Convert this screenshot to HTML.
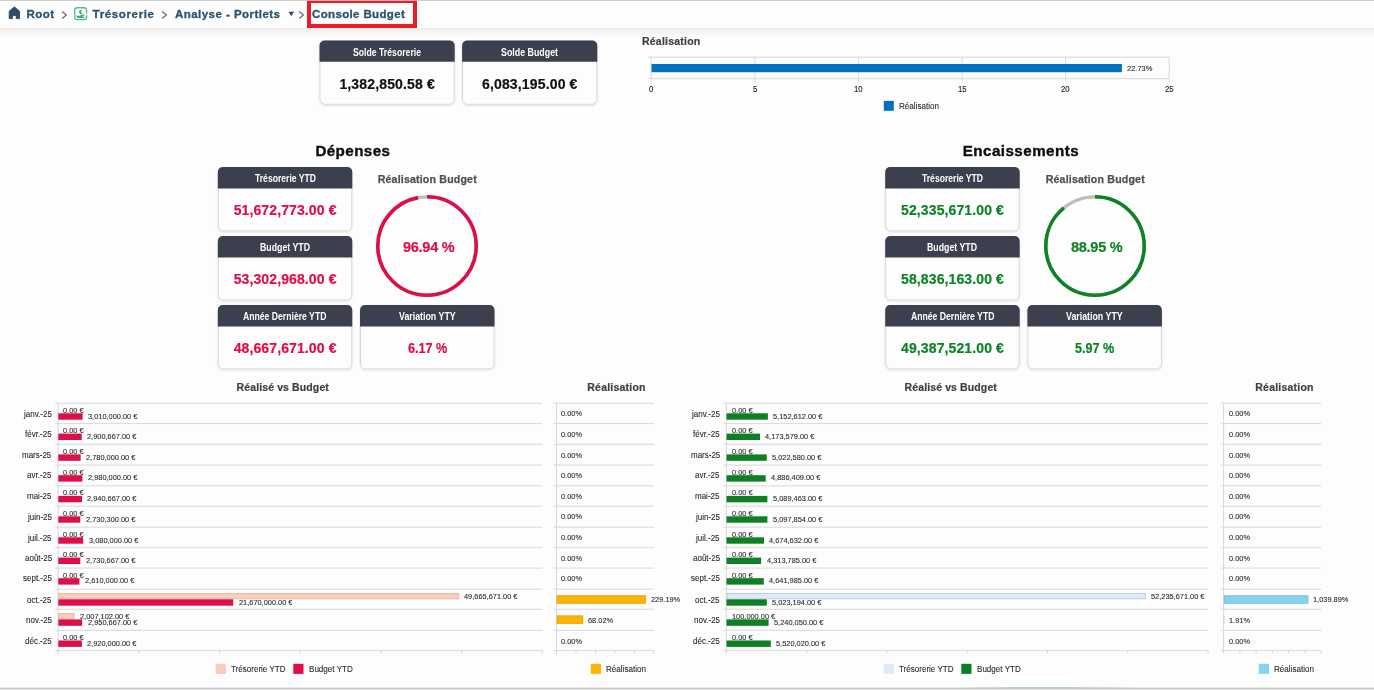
<!DOCTYPE html>
<html><head><meta charset="utf-8"><title>Console Budget</title>
<style>
html,body{margin:0;padding:0;background:#fdfdfd;}
body{width:1374px;height:690px;position:relative;overflow:hidden;font-family:"Liberation Sans", sans-serif;}
.t{position:absolute;white-space:pre;font-family:"Liberation Sans", sans-serif;}
</style></head><body><div id="wrap" style="position:absolute;left:0;top:0;width:1374px;height:690px;will-change:transform;transform:translateZ(0)">
<div style="position:absolute;left:0;top:0;width:1374px;height:28px;background:#fdfdfe;"></div>
<div style="position:absolute;left:0;top:27.4px;width:1374px;height:12px;background:linear-gradient(180deg,rgba(0,0,20,0.035),rgba(0,0,20,0.06) 12%,rgba(0,0,10,0.036) 40%,rgba(0,0,0,0.012) 78%,rgba(0,0,0,0))"></div>
<div style="position:absolute;left:0;top:0;width:1374px;height:28px;background:#fdfdfe"></div>
<svg style="position:absolute;left:8px;top:6px" width="14" height="14" viewBox="0 0 14 14"><path d="M6.4 0.9 L11.6 5.2 V12.6 H8.2 V9.4 H4.6 V12.6 H1.2 V5.2 Z" fill="#2b4d68" stroke="#2b4d68" stroke-width="0.9" stroke-linejoin="round"/></svg>
<svg style="position:absolute;left:61px;top:10px" width="8" height="10" viewBox="0 0 8 10"><path d="M1.2 1.6 L5.3 5 L1.2 8.4" fill="none" stroke="#6f6f6f" stroke-width="1.35"/></svg>
<svg style="position:absolute;left:74.0px;top:7.4px" width="14" height="14" viewBox="0 0 14 14"><rect x="0.75" y="0.75" width="11.8" height="11.8" rx="2.3" fill="#fff" stroke="#4fbf88" stroke-width="1.35"/><rect x="11.6" y="6.4" width="2" height="1.9" fill="#fff"/><path d="M7.9 2.8 A2.3 2.3 0 1 0 8.5 7.0 A2.9 2.9 0 0 1 7.9 2.8 Z" fill="#2fae6b"/><path d="M2.3 7.9 C3.2 9.2 5 9.0 6.6 8.3 L10.4 7.3 V11 H4.4 C3 11 2.3 9.6 2.3 7.9Z" fill="#35b272"/><rect x="8.6" y="8.9" width="1.6" height="1.0" fill="#e9f7ef"/></svg>
<svg style="position:absolute;left:160.5px;top:10px" width="8" height="10" viewBox="0 0 8 10"><path d="M1.2 1.6 L5.3 5 L1.2 8.4" fill="none" stroke="#6f6f6f" stroke-width="1.35"/></svg>
<svg style="position:absolute;left:298px;top:10px" width="8" height="10" viewBox="0 0 8 10"><path d="M1.2 1.6 L5.3 5 L1.2 8.4" fill="none" stroke="#6f6f6f" stroke-width="1.35"/></svg>
<div style="position:absolute;left:307px;top:-1px;width:110px;height:29px;border:4px solid #ec1c24;box-sizing:border-box"></div>
<svg style="position:absolute;left:372px;top:191px" width="110" height="110" viewBox="0 0 110 110"><circle cx="55" cy="55" r="49.2" fill="none" stroke="#bdbdbd" stroke-width="3.2"/><circle cx="55" cy="55" r="49.2" fill="none" stroke="#dc0f49" stroke-width="3.6" stroke-dasharray="299.67 309.13" transform="rotate(-90 55 55)"/></svg>
<svg style="position:absolute;left:1040.3px;top:191px" width="110" height="110" viewBox="0 0 110 110"><circle cx="55" cy="55" r="49.2" fill="none" stroke="#bdbdbd" stroke-width="3.2"/><circle cx="55" cy="55" r="49.2" fill="none" stroke="#0d8326" stroke-width="3.6" stroke-dasharray="274.97 309.13" transform="rotate(-90 55 55)"/></svg>
<div style="position:absolute;left:960px;top:687.4px;width:180px;height:1.4px;background:linear-gradient(90deg,rgba(150,215,170,0),rgba(150,215,170,0.8) 30%,rgba(150,215,170,0.8) 60%,rgba(150,215,170,0))"></div>
<svg style="position:absolute;left:0;top:0" width="1374" height="690" viewBox="0 0 1374 690"><defs><filter id="sh" x="-10%" y="-10%" width="120%" height="130%"><feDropShadow dx="0" dy="0.9" stdDeviation="0.9" flood-color="#000" flood-opacity="0.13"/></filter></defs>
<rect x="0.00" y="0.00" width="1374.00" height="0.90" fill="#c9c9c9"/>
<path d="M288.5 11.7 H294.1 L291.3 16.3 Z" fill="#2b4d68"/>
<rect x="320.00" y="40.90" width="134.20" height="63.40" rx="5.0" fill="#fdfdfd" stroke="#d9d9d9" stroke-width="1" filter="url(#sh)"/>
<path d="M319.50 61.80 V45.90 Q319.50 40.40 325.00 40.40 H449.20 Q454.70 40.40 454.70 45.90 V61.80 Z" fill="#3c3f4d"/>
<rect x="462.60" y="40.90" width="134.20" height="63.40" rx="5.0" fill="#fdfdfd" stroke="#d9d9d9" stroke-width="1" filter="url(#sh)"/>
<path d="M462.10 61.80 V45.90 Q462.10 40.40 467.60 40.40 H591.80 Q597.30 40.40 597.30 45.90 V61.80 Z" fill="#3c3f4d"/>
<rect x="648.00" y="56.60" width="521.20" height="1.20" fill="#dedede"/>
<rect x="648.00" y="78.00" width="521.20" height="1.20" fill="#dedede"/>
<rect x="650.60" y="56.70" width="1.20" height="25.20" fill="#dedede"/>
<rect x="754.20" y="56.70" width="1.20" height="25.20" fill="#dedede"/>
<rect x="857.80" y="56.70" width="1.20" height="25.20" fill="#dedede"/>
<rect x="961.40" y="56.70" width="1.20" height="25.20" fill="#dedede"/>
<rect x="1065.00" y="56.70" width="1.20" height="25.20" fill="#dedede"/>
<rect x="1168.60" y="56.70" width="1.20" height="25.20" fill="#dedede"/>
<rect x="651.50" y="64.00" width="470.40" height="8.20" fill="#0070c0"/>
<rect x="883.80" y="100.90" width="10.00" height="9.90" fill="#0070c0"/>
<rect x="218.30" y="167.50" width="133.50" height="63.40" rx="5.0" fill="#fdfdfd" stroke="#d9d9d9" stroke-width="1" filter="url(#sh)"/>
<path d="M217.80 188.40 V172.50 Q217.80 167.00 223.30 167.00 H346.80 Q352.30 167.00 352.30 172.50 V188.40 Z" fill="#3c3f4d"/>
<rect x="218.30" y="236.50" width="133.50" height="63.40" rx="5.0" fill="#fdfdfd" stroke="#d9d9d9" stroke-width="1" filter="url(#sh)"/>
<path d="M217.80 257.40 V241.50 Q217.80 236.00 223.30 236.00 H346.80 Q352.30 236.00 352.30 241.50 V257.40 Z" fill="#3c3f4d"/>
<rect x="218.30" y="305.50" width="133.50" height="63.40" rx="5.0" fill="#fdfdfd" stroke="#d9d9d9" stroke-width="1" filter="url(#sh)"/>
<path d="M217.80 326.40 V310.50 Q217.80 305.00 223.30 305.00 H346.80 Q352.30 305.00 352.30 310.50 V326.40 Z" fill="#3c3f4d"/>
<rect x="360.50" y="305.50" width="133.50" height="63.40" rx="5.0" fill="#fdfdfd" stroke="#d9d9d9" stroke-width="1" filter="url(#sh)"/>
<path d="M360.00 326.40 V310.50 Q360.00 305.00 365.50 305.00 H489.00 Q494.50 305.00 494.50 310.50 V326.40 Z" fill="#3c3f4d"/>
<rect x="885.70" y="167.50" width="133.50" height="63.40" rx="5.0" fill="#fdfdfd" stroke="#d9d9d9" stroke-width="1" filter="url(#sh)"/>
<path d="M885.20 188.40 V172.50 Q885.20 167.00 890.70 167.00 H1014.20 Q1019.70 167.00 1019.70 172.50 V188.40 Z" fill="#3c3f4d"/>
<rect x="885.70" y="236.50" width="133.50" height="63.40" rx="5.0" fill="#fdfdfd" stroke="#d9d9d9" stroke-width="1" filter="url(#sh)"/>
<path d="M885.20 257.40 V241.50 Q885.20 236.00 890.70 236.00 H1014.20 Q1019.70 236.00 1019.70 241.50 V257.40 Z" fill="#3c3f4d"/>
<rect x="885.70" y="305.50" width="133.50" height="63.40" rx="5.0" fill="#fdfdfd" stroke="#d9d9d9" stroke-width="1" filter="url(#sh)"/>
<path d="M885.20 326.40 V310.50 Q885.20 305.00 890.70 305.00 H1014.20 Q1019.70 305.00 1019.70 310.50 V326.40 Z" fill="#3c3f4d"/>
<rect x="1027.90" y="305.50" width="133.50" height="63.40" rx="5.0" fill="#fdfdfd" stroke="#d9d9d9" stroke-width="1" filter="url(#sh)"/>
<path d="M1027.40 326.40 V310.50 Q1027.40 305.00 1032.90 305.00 H1156.40 Q1161.90 305.00 1161.90 310.50 V326.40 Z" fill="#3c3f4d"/>
<rect x="55.10" y="402.60" width="487.30" height="1.20" fill="#dedede"/>
<rect x="55.10" y="422.90" width="487.30" height="1.20" fill="#dedede"/>
<rect x="55.10" y="443.70" width="487.30" height="1.20" fill="#dedede"/>
<rect x="55.10" y="464.50" width="487.30" height="1.20" fill="#dedede"/>
<rect x="55.10" y="485.20" width="487.30" height="1.20" fill="#dedede"/>
<rect x="55.10" y="505.60" width="487.30" height="1.20" fill="#dedede"/>
<rect x="55.10" y="526.60" width="487.30" height="1.20" fill="#dedede"/>
<rect x="55.10" y="546.90" width="487.30" height="1.20" fill="#dedede"/>
<rect x="55.10" y="567.50" width="487.30" height="1.20" fill="#dedede"/>
<rect x="55.10" y="588.60" width="487.30" height="1.20" fill="#dedede"/>
<rect x="55.10" y="608.70" width="487.30" height="1.20" fill="#dedede"/>
<rect x="55.10" y="629.80" width="487.30" height="1.20" fill="#dedede"/>
<rect x="55.10" y="649.90" width="487.30" height="1.20" fill="#dedede"/>
<rect x="57.60" y="403.20" width="1.00" height="250.30" fill="#d6d6d6"/>
<rect x="57.60" y="650.50" width="1.00" height="3.00" fill="#d6d6d6"/>
<rect x="138.32" y="650.50" width="1.00" height="3.00" fill="#d6d6d6"/>
<rect x="219.03" y="650.50" width="1.00" height="3.00" fill="#d6d6d6"/>
<rect x="299.75" y="650.50" width="1.00" height="3.00" fill="#d6d6d6"/>
<rect x="380.47" y="650.50" width="1.00" height="3.00" fill="#d6d6d6"/>
<rect x="461.18" y="650.50" width="1.00" height="3.00" fill="#d6d6d6"/>
<rect x="541.90" y="650.50" width="1.00" height="3.00" fill="#d6d6d6"/>
<rect x="58.30" y="413.30" width="24.30" height="6.40" fill="#dc0f49"/>
<rect x="58.30" y="433.60" width="23.40" height="6.40" fill="#dc0f49"/>
<rect x="58.30" y="454.40" width="22.40" height="6.40" fill="#dc0f49"/>
<rect x="58.30" y="475.20" width="24.10" height="6.40" fill="#dc0f49"/>
<rect x="58.30" y="495.90" width="23.70" height="6.40" fill="#dc0f49"/>
<rect x="58.30" y="516.30" width="22.00" height="6.40" fill="#dc0f49"/>
<rect x="58.30" y="537.30" width="24.90" height="6.40" fill="#dc0f49"/>
<rect x="58.30" y="557.60" width="22.00" height="6.40" fill="#dc0f49"/>
<rect x="58.30" y="578.20" width="21.10" height="6.40" fill="#dc0f49"/>
<rect x="58.80" y="593.50" width="399.90" height="5.30" fill="#f6cdb8" stroke="#ecb9a2" stroke-width="1"/>
<rect x="58.30" y="599.30" width="174.90" height="6.40" fill="#dc0f49"/>
<rect x="58.80" y="613.60" width="15.20" height="5.30" fill="#f6cdb8" stroke="#ecb9a2" stroke-width="1"/>
<rect x="58.30" y="619.40" width="23.80" height="6.40" fill="#dc0f49"/>
<rect x="58.30" y="640.50" width="23.60" height="6.40" fill="#dc0f49"/>
<rect x="215.60" y="663.80" width="10.20" height="10.10" fill="#f6cdb8"/>
<rect x="293.30" y="663.80" width="10.20" height="10.10" fill="#dc0f49"/>
<rect x="723.30" y="402.60" width="484.70" height="1.20" fill="#dedede"/>
<rect x="723.30" y="422.90" width="484.70" height="1.20" fill="#dedede"/>
<rect x="723.30" y="443.70" width="484.70" height="1.20" fill="#dedede"/>
<rect x="723.30" y="464.50" width="484.70" height="1.20" fill="#dedede"/>
<rect x="723.30" y="485.20" width="484.70" height="1.20" fill="#dedede"/>
<rect x="723.30" y="505.60" width="484.70" height="1.20" fill="#dedede"/>
<rect x="723.30" y="526.60" width="484.70" height="1.20" fill="#dedede"/>
<rect x="723.30" y="546.90" width="484.70" height="1.20" fill="#dedede"/>
<rect x="723.30" y="567.50" width="484.70" height="1.20" fill="#dedede"/>
<rect x="723.30" y="588.60" width="484.70" height="1.20" fill="#dedede"/>
<rect x="723.30" y="608.70" width="484.70" height="1.20" fill="#dedede"/>
<rect x="723.30" y="629.80" width="484.70" height="1.20" fill="#dedede"/>
<rect x="723.30" y="649.90" width="484.70" height="1.20" fill="#dedede"/>
<rect x="725.80" y="403.20" width="1.00" height="250.30" fill="#d6d6d6"/>
<rect x="725.80" y="650.50" width="1.00" height="3.00" fill="#d6d6d6"/>
<rect x="806.08" y="650.50" width="1.00" height="3.00" fill="#d6d6d6"/>
<rect x="886.37" y="650.50" width="1.00" height="3.00" fill="#d6d6d6"/>
<rect x="966.65" y="650.50" width="1.00" height="3.00" fill="#d6d6d6"/>
<rect x="1046.93" y="650.50" width="1.00" height="3.00" fill="#d6d6d6"/>
<rect x="1127.22" y="650.50" width="1.00" height="3.00" fill="#d6d6d6"/>
<rect x="1207.50" y="650.50" width="1.00" height="3.00" fill="#d6d6d6"/>
<rect x="726.50" y="413.30" width="41.40" height="6.40" fill="#0f7f25"/>
<rect x="726.50" y="433.60" width="33.50" height="6.40" fill="#0f7f25"/>
<rect x="726.50" y="454.40" width="40.30" height="6.40" fill="#0f7f25"/>
<rect x="726.50" y="475.20" width="39.20" height="6.40" fill="#0f7f25"/>
<rect x="726.50" y="495.90" width="40.90" height="6.40" fill="#0f7f25"/>
<rect x="726.50" y="516.30" width="40.90" height="6.40" fill="#0f7f25"/>
<rect x="726.50" y="537.30" width="37.50" height="6.40" fill="#0f7f25"/>
<rect x="726.50" y="557.60" width="34.60" height="6.40" fill="#0f7f25"/>
<rect x="726.50" y="578.20" width="37.30" height="6.40" fill="#0f7f25"/>
<rect x="727.00" y="593.50" width="418.40" height="5.30" fill="#dfeaf8" stroke="#b9cfe9" stroke-width="1"/>
<rect x="726.50" y="599.30" width="40.30" height="6.40" fill="#0f7f25"/>
<rect x="726.50" y="613.10" width="0.80" height="6.30" fill="#dfeaf8" opacity="0.8"/>
<rect x="726.50" y="619.40" width="42.10" height="6.40" fill="#0f7f25"/>
<rect x="726.50" y="640.50" width="44.30" height="6.40" fill="#0f7f25"/>
<rect x="883.60" y="663.80" width="10.20" height="10.10" fill="#dfeaf8"/>
<rect x="961.30" y="663.80" width="10.20" height="10.10" fill="#0f7f25"/>
<rect x="553.50" y="402.60" width="100.50" height="1.20" fill="#dedede"/>
<rect x="553.50" y="422.90" width="100.50" height="1.20" fill="#dedede"/>
<rect x="553.50" y="443.70" width="100.50" height="1.20" fill="#dedede"/>
<rect x="553.50" y="464.50" width="100.50" height="1.20" fill="#dedede"/>
<rect x="553.50" y="485.20" width="100.50" height="1.20" fill="#dedede"/>
<rect x="553.50" y="505.60" width="100.50" height="1.20" fill="#dedede"/>
<rect x="553.50" y="526.60" width="100.50" height="1.20" fill="#dedede"/>
<rect x="553.50" y="546.90" width="100.50" height="1.20" fill="#dedede"/>
<rect x="553.50" y="567.50" width="100.50" height="1.20" fill="#dedede"/>
<rect x="553.50" y="588.60" width="100.50" height="1.20" fill="#dedede"/>
<rect x="553.50" y="608.70" width="100.50" height="1.20" fill="#dedede"/>
<rect x="553.50" y="629.80" width="100.50" height="1.20" fill="#dedede"/>
<rect x="553.50" y="649.90" width="100.50" height="1.20" fill="#dedede"/>
<rect x="556.00" y="403.20" width="1.00" height="250.30" fill="#d6d6d6"/>
<rect x="556.00" y="650.50" width="1.00" height="3.00" fill="#d6d6d6"/>
<rect x="575.50" y="650.50" width="1.00" height="3.00" fill="#d6d6d6"/>
<rect x="595.00" y="650.50" width="1.00" height="3.00" fill="#d6d6d6"/>
<rect x="614.50" y="650.50" width="1.00" height="3.00" fill="#d6d6d6"/>
<rect x="634.00" y="650.50" width="1.00" height="3.00" fill="#d6d6d6"/>
<rect x="653.50" y="650.50" width="1.00" height="3.00" fill="#d6d6d6"/>
<rect x="557.20" y="595.80" width="88.38" height="7.40" fill="#ffb400" stroke="#e9a000" stroke-width="1"/>
<rect x="557.20" y="615.90" width="25.53" height="7.40" fill="#ffb400" stroke="#e9a000" stroke-width="1"/>
<rect x="590.80" y="663.80" width="10.20" height="10.10" fill="#ffb400"/>
<rect x="1220.60" y="402.60" width="100.60" height="1.20" fill="#dedede"/>
<rect x="1220.60" y="422.90" width="100.60" height="1.20" fill="#dedede"/>
<rect x="1220.60" y="443.70" width="100.60" height="1.20" fill="#dedede"/>
<rect x="1220.60" y="464.50" width="100.60" height="1.20" fill="#dedede"/>
<rect x="1220.60" y="485.20" width="100.60" height="1.20" fill="#dedede"/>
<rect x="1220.60" y="505.60" width="100.60" height="1.20" fill="#dedede"/>
<rect x="1220.60" y="526.60" width="100.60" height="1.20" fill="#dedede"/>
<rect x="1220.60" y="546.90" width="100.60" height="1.20" fill="#dedede"/>
<rect x="1220.60" y="567.50" width="100.60" height="1.20" fill="#dedede"/>
<rect x="1220.60" y="588.60" width="100.60" height="1.20" fill="#dedede"/>
<rect x="1220.60" y="608.70" width="100.60" height="1.20" fill="#dedede"/>
<rect x="1220.60" y="629.80" width="100.60" height="1.20" fill="#dedede"/>
<rect x="1220.60" y="649.90" width="100.60" height="1.20" fill="#dedede"/>
<rect x="1223.10" y="403.20" width="1.00" height="250.30" fill="#d6d6d6"/>
<rect x="1223.10" y="650.50" width="1.00" height="3.00" fill="#d6d6d6"/>
<rect x="1239.37" y="650.50" width="1.00" height="3.00" fill="#d6d6d6"/>
<rect x="1255.63" y="650.50" width="1.00" height="3.00" fill="#d6d6d6"/>
<rect x="1271.90" y="650.50" width="1.00" height="3.00" fill="#d6d6d6"/>
<rect x="1288.17" y="650.50" width="1.00" height="3.00" fill="#d6d6d6"/>
<rect x="1304.43" y="650.50" width="1.00" height="3.00" fill="#d6d6d6"/>
<rect x="1320.70" y="650.50" width="1.00" height="3.00" fill="#d6d6d6"/>
<rect x="1224.30" y="595.80" width="83.58" height="7.40" fill="#87d4ef" stroke="#6cc0de" stroke-width="1"/>
<rect x="1223.80" y="615.40" width="0.70" height="8.40" fill="#87d4ef" opacity="0.75"/>
<rect x="1258.80" y="663.80" width="10.20" height="10.10" fill="#87d4ef"/>
<rect x="0.00" y="687.60" width="1374.00" height="1.60" fill="#c9c9c9"/>
<rect x="0.00" y="689.20" width="1374.00" height="0.80" fill="#dddddd"/>
</svg>
<span class="t" style="left:26.60px;top:6.00px;font-size:11.5px;line-height:16px;color:#2c526d;font-weight:bold;letter-spacing:0.471px;-webkit-text-stroke:0.3px #2c526d;">Root</span>
<span class="t" style="left:92.60px;top:6.00px;font-size:11.5px;line-height:16px;color:#2c526d;font-weight:bold;letter-spacing:0.642px;-webkit-text-stroke:0.3px #2c526d;">Trésorerie</span>
<span class="t" style="left:175.00px;top:6.00px;font-size:11.5px;line-height:16px;color:#2c526d;font-weight:bold;letter-spacing:0.461px;-webkit-text-stroke:0.3px #2c526d;">Analyse - Portlets</span>
<span class="t" style="left:312.00px;top:6.00px;font-size:11.5px;line-height:16px;color:#2c526d;font-weight:bold;letter-spacing:0.356px;-webkit-text-stroke:0.3px #2c526d;">Console Budget</span>
<span class="t" style="left:353.10px;top:45.70px;font-size:10px;line-height:14px;color:#fff;font-weight:bold;transform:scaleX(0.8676);transform-origin:0 50%;">Solde Trésorerie</span>
<span class="t" style="left:339.40px;top:74.80px;font-size:14px;line-height:19px;color:#111;font-weight:bold;letter-spacing:0.152px;-webkit-text-stroke:0.2px #111;">1,382,850.58 €</span>
<span class="t" style="left:501.20px;top:45.70px;font-size:10px;line-height:14px;color:#fff;font-weight:bold;transform:scaleX(0.8844);transform-origin:0 50%;">Solde Budget</span>
<span class="t" style="left:482.00px;top:74.80px;font-size:14px;line-height:19px;color:#111;font-weight:bold;letter-spacing:0.152px;-webkit-text-stroke:0.2px #111;">6,083,195.00 €</span>
<span class="t" style="left:642.00px;top:33.70px;font-size:10.5px;line-height:15px;color:#3f3f3f;font-weight:bold;letter-spacing:0.217px;-webkit-text-stroke:0.2px #3f3f3f;">Réalisation</span>
<span class="t" style="left:649.03px;top:83.00px;font-size:9.36px;line-height:13px;color:#1a1a1a;transform:scaleX(0.8333);transform-origin:0 50%;-webkit-text-stroke:0.12px #1a1a1a;">0</span>
<span class="t" style="left:752.63px;top:83.00px;font-size:9.36px;line-height:13px;color:#1a1a1a;transform:scaleX(0.8333);transform-origin:0 50%;-webkit-text-stroke:0.12px #1a1a1a;">5</span>
<span class="t" style="left:854.06px;top:83.00px;font-size:9.36px;line-height:13px;color:#1a1a1a;transform:scaleX(0.8333);transform-origin:0 50%;-webkit-text-stroke:0.12px #1a1a1a;">10</span>
<span class="t" style="left:957.66px;top:83.00px;font-size:9.36px;line-height:13px;color:#1a1a1a;transform:scaleX(0.8333);transform-origin:0 50%;-webkit-text-stroke:0.12px #1a1a1a;">15</span>
<span class="t" style="left:1061.26px;top:83.00px;font-size:9.36px;line-height:13px;color:#1a1a1a;transform:scaleX(0.8333);transform-origin:0 50%;-webkit-text-stroke:0.12px #1a1a1a;">20</span>
<span class="t" style="left:1164.86px;top:83.00px;font-size:9.36px;line-height:13px;color:#1a1a1a;transform:scaleX(0.8333);transform-origin:0 50%;-webkit-text-stroke:0.12px #1a1a1a;">25</span>
<span class="t" style="left:1126.50px;top:62.80px;font-size:8.1px;line-height:12px;color:#2a2a2a;transform:scaleX(0.9252);transform-origin:0 50%;-webkit-text-stroke:0.1px #2a2a2a;">22.73%</span>
<span class="t" style="left:898.80px;top:99.80px;font-size:8.9px;line-height:13px;color:#2a2a2a;transform:scaleX(0.9107);transform-origin:0 50%;-webkit-text-stroke:0.1px #2a2a2a;">Réalisation</span>
<span class="t" style="left:315.40px;top:141.00px;font-size:15.2px;line-height:20px;color:#0c0c0c;font-weight:bold;letter-spacing:0.405px;-webkit-text-stroke:0.35px #0c0c0c;">Dépenses</span>
<span class="t" style="left:254.55px;top:172.30px;font-size:10px;line-height:14px;color:#fff;font-weight:bold;transform:scaleX(0.8595);transform-origin:0 50%;">Trésorerie YTD</span>
<span class="t" style="left:233.65px;top:201.40px;font-size:14px;line-height:19px;color:#dc0f49;font-weight:bold;letter-spacing:0.113px;-webkit-text-stroke:0.2px #dc0f49;">51,672,773.00 €</span>
<span class="t" style="left:260.05px;top:241.30px;font-size:10px;line-height:14px;color:#fff;font-weight:bold;transform:scaleX(0.8765);transform-origin:0 50%;">Budget YTD</span>
<span class="t" style="left:233.65px;top:270.40px;font-size:14px;line-height:19px;color:#dc0f49;font-weight:bold;letter-spacing:0.113px;-webkit-text-stroke:0.2px #dc0f49;">53,302,968.00 €</span>
<span class="t" style="left:243.35px;top:310.30px;font-size:10px;line-height:14px;color:#fff;font-weight:bold;transform:scaleX(0.8641);transform-origin:0 50%;">Année Dernière YTD</span>
<span class="t" style="left:233.65px;top:339.40px;font-size:14px;line-height:19px;color:#dc0f49;font-weight:bold;letter-spacing:0.113px;-webkit-text-stroke:0.2px #dc0f49;">48,667,671.00 €</span>
<span class="t" style="left:398.90px;top:310.30px;font-size:10px;line-height:14px;color:#fff;font-weight:bold;transform:scaleX(0.8818);transform-origin:0 50%;">Variation YTY</span>
<span class="t" style="left:407.60px;top:339.40px;font-size:14px;line-height:19px;color:#dc0f49;font-weight:bold;transform:scaleX(0.9015);transform-origin:0 50%;-webkit-text-stroke:0.2px #dc0f49;">6.17 %</span>
<span class="t" style="left:377.70px;top:171.70px;font-size:10.6px;line-height:15px;color:#505050;font-weight:bold;letter-spacing:0.179px;-webkit-text-stroke:0.25px #505050;">Réalisation Budget</span>
<span class="t" style="left:402.90px;top:238.10px;font-size:14.5px;line-height:19px;color:#dc0f49;font-weight:bold;letter-spacing:-0.236px;-webkit-text-stroke:0.2px #dc0f49;">96.94 %</span>
<span class="t" style="left:962.70px;top:141.00px;font-size:15.2px;line-height:20px;color:#0c0c0c;font-weight:bold;letter-spacing:0.451px;-webkit-text-stroke:0.35px #0c0c0c;">Encaissements</span>
<span class="t" style="left:921.95px;top:172.30px;font-size:10px;line-height:14px;color:#fff;font-weight:bold;transform:scaleX(0.8595);transform-origin:0 50%;">Trésorerie YTD</span>
<span class="t" style="left:901.05px;top:201.40px;font-size:14px;line-height:19px;color:#0d8326;font-weight:bold;letter-spacing:0.113px;-webkit-text-stroke:0.2px #0d8326;">52,335,671.00 €</span>
<span class="t" style="left:927.45px;top:241.30px;font-size:10px;line-height:14px;color:#fff;font-weight:bold;transform:scaleX(0.8765);transform-origin:0 50%;">Budget YTD</span>
<span class="t" style="left:901.05px;top:270.40px;font-size:14px;line-height:19px;color:#0d8326;font-weight:bold;letter-spacing:0.113px;-webkit-text-stroke:0.2px #0d8326;">58,836,163.00 €</span>
<span class="t" style="left:910.75px;top:310.30px;font-size:10px;line-height:14px;color:#fff;font-weight:bold;transform:scaleX(0.8641);transform-origin:0 50%;">Année Dernière YTD</span>
<span class="t" style="left:901.05px;top:339.40px;font-size:14px;line-height:19px;color:#0d8326;font-weight:bold;letter-spacing:0.113px;-webkit-text-stroke:0.2px #0d8326;">49,387,521.00 €</span>
<span class="t" style="left:1066.30px;top:310.30px;font-size:10px;line-height:14px;color:#fff;font-weight:bold;transform:scaleX(0.8818);transform-origin:0 50%;">Variation YTY</span>
<span class="t" style="left:1075.00px;top:339.40px;font-size:14px;line-height:19px;color:#0d8326;font-weight:bold;transform:scaleX(0.9015);transform-origin:0 50%;-webkit-text-stroke:0.2px #0d8326;">5.97 %</span>
<span class="t" style="left:1045.70px;top:171.70px;font-size:10.6px;line-height:15px;color:#505050;font-weight:bold;letter-spacing:0.179px;-webkit-text-stroke:0.25px #505050;">Réalisation Budget</span>
<span class="t" style="left:1070.90px;top:238.10px;font-size:14.5px;line-height:19px;color:#0d8326;font-weight:bold;letter-spacing:-0.236px;-webkit-text-stroke:0.2px #0d8326;">88.95 %</span>
<span class="t" style="left:236.55px;top:379.70px;font-size:10.5px;line-height:15px;color:#3f3f3f;font-weight:bold;letter-spacing:0.115px;-webkit-text-stroke:0.2px #3f3f3f;">Réalisé vs Budget</span>
<span class="t" style="left:23.83px;top:407.50px;font-size:8.96px;line-height:13px;color:#2a2a2a;transform:scaleX(0.8929);transform-origin:0 50%;-webkit-text-stroke:0.1px #2a2a2a;">janv.-25</span>
<span class="t" style="left:63.40px;top:404.70px;font-size:7.99px;line-height:12px;color:#2a2a2a;transform:scaleX(0.9259);transform-origin:0 50%;-webkit-text-stroke:0.1px #2a2a2a;">0.00 €</span>
<span class="t" style="left:88.00px;top:410.50px;font-size:7.99px;line-height:12px;color:#2a2a2a;transform:scaleX(0.9259);transform-origin:0 50%;-webkit-text-stroke:0.1px #2a2a2a;">3,010,000.00 €</span>
<span class="t" style="left:25.01px;top:427.80px;font-size:8.96px;line-height:13px;color:#2a2a2a;transform:scaleX(0.8929);transform-origin:0 50%;-webkit-text-stroke:0.1px #2a2a2a;">févr.-25</span>
<span class="t" style="left:63.40px;top:425.00px;font-size:7.99px;line-height:12px;color:#2a2a2a;transform:scaleX(0.9259);transform-origin:0 50%;-webkit-text-stroke:0.1px #2a2a2a;">0.00 €</span>
<span class="t" style="left:87.11px;top:430.80px;font-size:7.99px;line-height:12px;color:#2a2a2a;transform:scaleX(0.9259);transform-origin:0 50%;-webkit-text-stroke:0.1px #2a2a2a;">2,900,667.00 €</span>
<span class="t" style="left:22.36px;top:448.60px;font-size:8.96px;line-height:13px;color:#2a2a2a;transform:scaleX(0.8929);transform-origin:0 50%;-webkit-text-stroke:0.1px #2a2a2a;">mars-25</span>
<span class="t" style="left:63.40px;top:445.80px;font-size:7.99px;line-height:12px;color:#2a2a2a;transform:scaleX(0.9259);transform-origin:0 50%;-webkit-text-stroke:0.1px #2a2a2a;">0.00 €</span>
<span class="t" style="left:86.14px;top:451.60px;font-size:7.99px;line-height:12px;color:#2a2a2a;transform:scaleX(0.9259);transform-origin:0 50%;-webkit-text-stroke:0.1px #2a2a2a;">2,780,000.00 €</span>
<span class="t" style="left:27.23px;top:469.40px;font-size:8.96px;line-height:13px;color:#2a2a2a;transform:scaleX(0.8929);transform-origin:0 50%;-webkit-text-stroke:0.1px #2a2a2a;">avr.-25</span>
<span class="t" style="left:63.40px;top:466.60px;font-size:7.99px;line-height:12px;color:#2a2a2a;transform:scaleX(0.9259);transform-origin:0 50%;-webkit-text-stroke:0.1px #2a2a2a;">0.00 €</span>
<span class="t" style="left:87.75px;top:472.40px;font-size:7.99px;line-height:12px;color:#2a2a2a;transform:scaleX(0.9259);transform-origin:0 50%;-webkit-text-stroke:0.1px #2a2a2a;">2,980,000.00 €</span>
<span class="t" style="left:27.25px;top:490.10px;font-size:8.96px;line-height:13px;color:#2a2a2a;transform:scaleX(0.8929);transform-origin:0 50%;-webkit-text-stroke:0.1px #2a2a2a;">mai-25</span>
<span class="t" style="left:63.40px;top:487.30px;font-size:7.99px;line-height:12px;color:#2a2a2a;transform:scaleX(0.9259);transform-origin:0 50%;-webkit-text-stroke:0.1px #2a2a2a;">0.00 €</span>
<span class="t" style="left:87.44px;top:493.10px;font-size:7.99px;line-height:12px;color:#2a2a2a;transform:scaleX(0.9259);transform-origin:0 50%;-webkit-text-stroke:0.1px #2a2a2a;">2,940,667.00 €</span>
<span class="t" style="left:27.68px;top:510.50px;font-size:8.96px;line-height:13px;color:#2a2a2a;transform:scaleX(0.8929);transform-origin:0 50%;-webkit-text-stroke:0.1px #2a2a2a;">juin-25</span>
<span class="t" style="left:63.40px;top:507.70px;font-size:7.99px;line-height:12px;color:#2a2a2a;transform:scaleX(0.9259);transform-origin:0 50%;-webkit-text-stroke:0.1px #2a2a2a;">0.00 €</span>
<span class="t" style="left:85.74px;top:513.50px;font-size:7.99px;line-height:12px;color:#2a2a2a;transform:scaleX(0.9259);transform-origin:0 50%;-webkit-text-stroke:0.1px #2a2a2a;">2,730,300.00 €</span>
<span class="t" style="left:28.12px;top:531.50px;font-size:8.96px;line-height:13px;color:#2a2a2a;transform:scaleX(0.8929);transform-origin:0 50%;-webkit-text-stroke:0.1px #2a2a2a;">juil.-25</span>
<span class="t" style="left:63.40px;top:528.70px;font-size:7.99px;line-height:12px;color:#2a2a2a;transform:scaleX(0.9259);transform-origin:0 50%;-webkit-text-stroke:0.1px #2a2a2a;">0.00 €</span>
<span class="t" style="left:88.56px;top:534.50px;font-size:7.99px;line-height:12px;color:#2a2a2a;transform:scaleX(0.9259);transform-origin:0 50%;-webkit-text-stroke:0.1px #2a2a2a;">3,080,000.00 €</span>
<span class="t" style="left:24.56px;top:551.80px;font-size:8.96px;line-height:13px;color:#2a2a2a;transform:scaleX(0.8929);transform-origin:0 50%;-webkit-text-stroke:0.1px #2a2a2a;">août-25</span>
<span class="t" style="left:63.40px;top:549.00px;font-size:7.99px;line-height:12px;color:#2a2a2a;transform:scaleX(0.9259);transform-origin:0 50%;-webkit-text-stroke:0.1px #2a2a2a;">0.00 €</span>
<span class="t" style="left:85.74px;top:554.80px;font-size:7.99px;line-height:12px;color:#2a2a2a;transform:scaleX(0.9259);transform-origin:0 50%;-webkit-text-stroke:0.1px #2a2a2a;">2,730,667.00 €</span>
<span class="t" style="left:22.79px;top:572.40px;font-size:8.96px;line-height:13px;color:#2a2a2a;transform:scaleX(0.8929);transform-origin:0 50%;-webkit-text-stroke:0.1px #2a2a2a;">sept.-25</span>
<span class="t" style="left:63.40px;top:569.60px;font-size:7.99px;line-height:12px;color:#2a2a2a;transform:scaleX(0.9259);transform-origin:0 50%;-webkit-text-stroke:0.1px #2a2a2a;">0.00 €</span>
<span class="t" style="left:84.77px;top:575.40px;font-size:7.99px;line-height:12px;color:#2a2a2a;transform:scaleX(0.9259);transform-origin:0 50%;-webkit-text-stroke:0.1px #2a2a2a;">2,610,000.00 €</span>
<span class="t" style="left:27.23px;top:593.50px;font-size:8.96px;line-height:13px;color:#2a2a2a;transform:scaleX(0.8929);transform-origin:0 50%;-webkit-text-stroke:0.1px #2a2a2a;">oct.-25</span>
<span class="t" style="left:464.28px;top:590.70px;font-size:7.99px;line-height:12px;color:#2a2a2a;transform:scaleX(0.9259);transform-origin:0 50%;-webkit-text-stroke:0.1px #2a2a2a;">49,665,671.00 €</span>
<span class="t" style="left:238.61px;top:596.50px;font-size:7.99px;line-height:12px;color:#2a2a2a;transform:scaleX(0.9259);transform-origin:0 50%;-webkit-text-stroke:0.1px #2a2a2a;">21,670,000.00 €</span>
<span class="t" style="left:25.61px;top:613.60px;font-size:8.96px;line-height:13px;color:#2a2a2a;transform:scaleX(0.8929);transform-origin:0 50%;-webkit-text-stroke:0.1px #2a2a2a;">nov.-25</span>
<span class="t" style="left:79.60px;top:610.80px;font-size:7.99px;line-height:12px;color:#2a2a2a;transform:scaleX(0.9259);transform-origin:0 50%;-webkit-text-stroke:0.1px #2a2a2a;">2,007,102.00 €</span>
<span class="t" style="left:87.52px;top:616.60px;font-size:7.99px;line-height:12px;color:#2a2a2a;transform:scaleX(0.9259);transform-origin:0 50%;-webkit-text-stroke:0.1px #2a2a2a;">2,950,667.00 €</span>
<span class="t" style="left:25.01px;top:634.70px;font-size:8.96px;line-height:13px;color:#2a2a2a;transform:scaleX(0.8929);transform-origin:0 50%;-webkit-text-stroke:0.1px #2a2a2a;">déc.-25</span>
<span class="t" style="left:63.40px;top:631.90px;font-size:7.99px;line-height:12px;color:#2a2a2a;transform:scaleX(0.9259);transform-origin:0 50%;-webkit-text-stroke:0.1px #2a2a2a;">0.00 €</span>
<span class="t" style="left:87.27px;top:637.70px;font-size:7.99px;line-height:12px;color:#2a2a2a;transform:scaleX(0.9259);transform-origin:0 50%;-webkit-text-stroke:0.1px #2a2a2a;">2,920,000.00 €</span>
<span class="t" style="left:231.00px;top:662.70px;font-size:8.9px;line-height:13px;color:#2a2a2a;transform:scaleX(0.9057);transform-origin:0 50%;-webkit-text-stroke:0.1px #2a2a2a;">Trésorerie YTD</span>
<span class="t" style="left:309.00px;top:662.70px;font-size:8.9px;line-height:13px;color:#2a2a2a;transform:scaleX(0.9089);transform-origin:0 50%;-webkit-text-stroke:0.1px #2a2a2a;">Budget YTD</span>
<span class="t" style="left:904.55px;top:379.70px;font-size:10.5px;line-height:15px;color:#3f3f3f;font-weight:bold;letter-spacing:0.115px;-webkit-text-stroke:0.2px #3f3f3f;">Réalisé vs Budget</span>
<span class="t" style="left:692.02px;top:407.50px;font-size:8.96px;line-height:13px;color:#2a2a2a;transform:scaleX(0.8929);transform-origin:0 50%;-webkit-text-stroke:0.1px #2a2a2a;">janv.-25</span>
<span class="t" style="left:731.60px;top:404.70px;font-size:7.99px;line-height:12px;color:#2a2a2a;transform:scaleX(0.9259);transform-origin:0 50%;-webkit-text-stroke:0.1px #2a2a2a;">0.00 €</span>
<span class="t" style="left:773.27px;top:410.50px;font-size:7.99px;line-height:12px;color:#2a2a2a;transform:scaleX(0.9259);transform-origin:0 50%;-webkit-text-stroke:0.1px #2a2a2a;">5,152,612.00 €</span>
<span class="t" style="left:693.21px;top:427.80px;font-size:8.96px;line-height:13px;color:#2a2a2a;transform:scaleX(0.8929);transform-origin:0 50%;-webkit-text-stroke:0.1px #2a2a2a;">févr.-25</span>
<span class="t" style="left:731.60px;top:425.00px;font-size:7.99px;line-height:12px;color:#2a2a2a;transform:scaleX(0.9259);transform-origin:0 50%;-webkit-text-stroke:0.1px #2a2a2a;">0.00 €</span>
<span class="t" style="left:765.41px;top:430.80px;font-size:7.99px;line-height:12px;color:#2a2a2a;transform:scaleX(0.9259);transform-origin:0 50%;-webkit-text-stroke:0.1px #2a2a2a;">4,173,579.00 €</span>
<span class="t" style="left:690.56px;top:448.60px;font-size:8.96px;line-height:13px;color:#2a2a2a;transform:scaleX(0.8929);transform-origin:0 50%;-webkit-text-stroke:0.1px #2a2a2a;">mars-25</span>
<span class="t" style="left:731.60px;top:445.80px;font-size:7.99px;line-height:12px;color:#2a2a2a;transform:scaleX(0.9259);transform-origin:0 50%;-webkit-text-stroke:0.1px #2a2a2a;">0.00 €</span>
<span class="t" style="left:772.22px;top:451.60px;font-size:7.99px;line-height:12px;color:#2a2a2a;transform:scaleX(0.9259);transform-origin:0 50%;-webkit-text-stroke:0.1px #2a2a2a;">5,022,580.00 €</span>
<span class="t" style="left:695.43px;top:469.40px;font-size:8.96px;line-height:13px;color:#2a2a2a;transform:scaleX(0.8929);transform-origin:0 50%;-webkit-text-stroke:0.1px #2a2a2a;">avr.-25</span>
<span class="t" style="left:731.60px;top:466.60px;font-size:7.99px;line-height:12px;color:#2a2a2a;transform:scaleX(0.9259);transform-origin:0 50%;-webkit-text-stroke:0.1px #2a2a2a;">0.00 €</span>
<span class="t" style="left:771.13px;top:472.40px;font-size:7.99px;line-height:12px;color:#2a2a2a;transform:scaleX(0.9259);transform-origin:0 50%;-webkit-text-stroke:0.1px #2a2a2a;">4,886,409.00 €</span>
<span class="t" style="left:695.45px;top:490.10px;font-size:8.96px;line-height:13px;color:#2a2a2a;transform:scaleX(0.8929);transform-origin:0 50%;-webkit-text-stroke:0.1px #2a2a2a;">mai-25</span>
<span class="t" style="left:731.60px;top:487.30px;font-size:7.99px;line-height:12px;color:#2a2a2a;transform:scaleX(0.9259);transform-origin:0 50%;-webkit-text-stroke:0.1px #2a2a2a;">0.00 €</span>
<span class="t" style="left:772.76px;top:493.10px;font-size:7.99px;line-height:12px;color:#2a2a2a;transform:scaleX(0.9259);transform-origin:0 50%;-webkit-text-stroke:0.1px #2a2a2a;">5,089,463.00 €</span>
<span class="t" style="left:695.88px;top:510.50px;font-size:8.96px;line-height:13px;color:#2a2a2a;transform:scaleX(0.8929);transform-origin:0 50%;-webkit-text-stroke:0.1px #2a2a2a;">juin-25</span>
<span class="t" style="left:731.60px;top:507.70px;font-size:7.99px;line-height:12px;color:#2a2a2a;transform:scaleX(0.9259);transform-origin:0 50%;-webkit-text-stroke:0.1px #2a2a2a;">0.00 €</span>
<span class="t" style="left:772.83px;top:513.50px;font-size:7.99px;line-height:12px;color:#2a2a2a;transform:scaleX(0.9259);transform-origin:0 50%;-webkit-text-stroke:0.1px #2a2a2a;">5,097,854.00 €</span>
<span class="t" style="left:696.32px;top:531.50px;font-size:8.96px;line-height:13px;color:#2a2a2a;transform:scaleX(0.8929);transform-origin:0 50%;-webkit-text-stroke:0.1px #2a2a2a;">juil.-25</span>
<span class="t" style="left:731.60px;top:528.70px;font-size:7.99px;line-height:12px;color:#2a2a2a;transform:scaleX(0.9259);transform-origin:0 50%;-webkit-text-stroke:0.1px #2a2a2a;">0.00 €</span>
<span class="t" style="left:769.43px;top:534.50px;font-size:7.99px;line-height:12px;color:#2a2a2a;transform:scaleX(0.9259);transform-origin:0 50%;-webkit-text-stroke:0.1px #2a2a2a;">4,674,632.00 €</span>
<span class="t" style="left:692.76px;top:551.80px;font-size:8.96px;line-height:13px;color:#2a2a2a;transform:scaleX(0.8929);transform-origin:0 50%;-webkit-text-stroke:0.1px #2a2a2a;">août-25</span>
<span class="t" style="left:731.60px;top:549.00px;font-size:7.99px;line-height:12px;color:#2a2a2a;transform:scaleX(0.9259);transform-origin:0 50%;-webkit-text-stroke:0.1px #2a2a2a;">0.00 €</span>
<span class="t" style="left:766.53px;top:554.80px;font-size:7.99px;line-height:12px;color:#2a2a2a;transform:scaleX(0.9259);transform-origin:0 50%;-webkit-text-stroke:0.1px #2a2a2a;">4,313,785.00 €</span>
<span class="t" style="left:690.99px;top:572.40px;font-size:8.96px;line-height:13px;color:#2a2a2a;transform:scaleX(0.8929);transform-origin:0 50%;-webkit-text-stroke:0.1px #2a2a2a;">sept.-25</span>
<span class="t" style="left:731.60px;top:569.60px;font-size:7.99px;line-height:12px;color:#2a2a2a;transform:scaleX(0.9259);transform-origin:0 50%;-webkit-text-stroke:0.1px #2a2a2a;">0.00 €</span>
<span class="t" style="left:769.17px;top:575.40px;font-size:7.99px;line-height:12px;color:#2a2a2a;transform:scaleX(0.9259);transform-origin:0 50%;-webkit-text-stroke:0.1px #2a2a2a;">4,641,985.00 €</span>
<span class="t" style="left:695.43px;top:593.50px;font-size:8.96px;line-height:13px;color:#2a2a2a;transform:scaleX(0.8929);transform-origin:0 50%;-webkit-text-stroke:0.1px #2a2a2a;">oct.-25</span>
<span class="t" style="left:1150.97px;top:590.70px;font-size:7.99px;line-height:12px;color:#2a2a2a;transform:scaleX(0.9259);transform-origin:0 50%;-webkit-text-stroke:0.1px #2a2a2a;">52,235,671.00 €</span>
<span class="t" style="left:772.23px;top:596.50px;font-size:7.99px;line-height:12px;color:#2a2a2a;transform:scaleX(0.9259);transform-origin:0 50%;-webkit-text-stroke:0.1px #2a2a2a;">5,023,194.00 €</span>
<span class="t" style="left:693.81px;top:613.60px;font-size:8.96px;line-height:13px;color:#2a2a2a;transform:scaleX(0.8929);transform-origin:0 50%;-webkit-text-stroke:0.1px #2a2a2a;">nov.-25</span>
<span class="t" style="left:732.40px;top:610.80px;font-size:7.99px;line-height:12px;color:#2a2a2a;transform:scaleX(0.9259);transform-origin:0 50%;-webkit-text-stroke:0.1px #2a2a2a;">100,000.00 €</span>
<span class="t" style="left:773.97px;top:616.60px;font-size:7.99px;line-height:12px;color:#2a2a2a;transform:scaleX(0.9259);transform-origin:0 50%;-webkit-text-stroke:0.1px #2a2a2a;">5,240,050.00 €</span>
<span class="t" style="left:693.21px;top:634.70px;font-size:8.96px;line-height:13px;color:#2a2a2a;transform:scaleX(0.8929);transform-origin:0 50%;-webkit-text-stroke:0.1px #2a2a2a;">déc.-25</span>
<span class="t" style="left:731.60px;top:631.90px;font-size:7.99px;line-height:12px;color:#2a2a2a;transform:scaleX(0.9259);transform-origin:0 50%;-webkit-text-stroke:0.1px #2a2a2a;">0.00 €</span>
<span class="t" style="left:776.22px;top:637.70px;font-size:7.99px;line-height:12px;color:#2a2a2a;transform:scaleX(0.9259);transform-origin:0 50%;-webkit-text-stroke:0.1px #2a2a2a;">5,520,020.00 €</span>
<span class="t" style="left:899.00px;top:662.70px;font-size:8.9px;line-height:13px;color:#2a2a2a;transform:scaleX(0.9057);transform-origin:0 50%;-webkit-text-stroke:0.1px #2a2a2a;">Trésorerie YTD</span>
<span class="t" style="left:977.00px;top:662.70px;font-size:8.9px;line-height:13px;color:#2a2a2a;transform:scaleX(0.9089);transform-origin:0 50%;-webkit-text-stroke:0.1px #2a2a2a;">Budget YTD</span>
<span class="t" style="left:587.30px;top:379.70px;font-size:10.5px;line-height:15px;color:#3f3f3f;font-weight:bold;letter-spacing:0.217px;-webkit-text-stroke:0.2px #3f3f3f;">Réalisation</span>
<span class="t" style="left:561.40px;top:408.40px;font-size:7.99px;line-height:12px;color:#2a2a2a;transform:scaleX(0.9259);transform-origin:0 50%;-webkit-text-stroke:0.1px #2a2a2a;">0.00%</span>
<span class="t" style="left:561.40px;top:428.70px;font-size:7.99px;line-height:12px;color:#2a2a2a;transform:scaleX(0.9259);transform-origin:0 50%;-webkit-text-stroke:0.1px #2a2a2a;">0.00%</span>
<span class="t" style="left:561.40px;top:449.50px;font-size:7.99px;line-height:12px;color:#2a2a2a;transform:scaleX(0.9259);transform-origin:0 50%;-webkit-text-stroke:0.1px #2a2a2a;">0.00%</span>
<span class="t" style="left:561.40px;top:470.30px;font-size:7.99px;line-height:12px;color:#2a2a2a;transform:scaleX(0.9259);transform-origin:0 50%;-webkit-text-stroke:0.1px #2a2a2a;">0.00%</span>
<span class="t" style="left:561.40px;top:491.00px;font-size:7.99px;line-height:12px;color:#2a2a2a;transform:scaleX(0.9259);transform-origin:0 50%;-webkit-text-stroke:0.1px #2a2a2a;">0.00%</span>
<span class="t" style="left:561.40px;top:511.40px;font-size:7.99px;line-height:12px;color:#2a2a2a;transform:scaleX(0.9259);transform-origin:0 50%;-webkit-text-stroke:0.1px #2a2a2a;">0.00%</span>
<span class="t" style="left:561.40px;top:532.40px;font-size:7.99px;line-height:12px;color:#2a2a2a;transform:scaleX(0.9259);transform-origin:0 50%;-webkit-text-stroke:0.1px #2a2a2a;">0.00%</span>
<span class="t" style="left:561.40px;top:552.70px;font-size:7.99px;line-height:12px;color:#2a2a2a;transform:scaleX(0.9259);transform-origin:0 50%;-webkit-text-stroke:0.1px #2a2a2a;">0.00%</span>
<span class="t" style="left:561.40px;top:573.30px;font-size:7.99px;line-height:12px;color:#2a2a2a;transform:scaleX(0.9259);transform-origin:0 50%;-webkit-text-stroke:0.1px #2a2a2a;">0.00%</span>
<span class="t" style="left:650.78px;top:594.40px;font-size:7.99px;line-height:12px;color:#2a2a2a;transform:scaleX(0.9259);transform-origin:0 50%;-webkit-text-stroke:0.1px #2a2a2a;">229.19%</span>
<span class="t" style="left:587.93px;top:614.50px;font-size:7.99px;line-height:12px;color:#2a2a2a;transform:scaleX(0.9259);transform-origin:0 50%;-webkit-text-stroke:0.1px #2a2a2a;">68.02%</span>
<span class="t" style="left:561.40px;top:635.60px;font-size:7.99px;line-height:12px;color:#2a2a2a;transform:scaleX(0.9259);transform-origin:0 50%;-webkit-text-stroke:0.1px #2a2a2a;">0.00%</span>
<span class="t" style="left:606.00px;top:662.70px;font-size:8.9px;line-height:13px;color:#2a2a2a;transform:scaleX(0.9107);transform-origin:0 50%;-webkit-text-stroke:0.1px #2a2a2a;">Réalisation</span>
<span class="t" style="left:1255.30px;top:379.70px;font-size:10.5px;line-height:15px;color:#3f3f3f;font-weight:bold;letter-spacing:0.217px;-webkit-text-stroke:0.2px #3f3f3f;">Réalisation</span>
<span class="t" style="left:1228.50px;top:408.40px;font-size:7.99px;line-height:12px;color:#2a2a2a;transform:scaleX(0.9259);transform-origin:0 50%;-webkit-text-stroke:0.1px #2a2a2a;">0.00%</span>
<span class="t" style="left:1228.50px;top:428.70px;font-size:7.99px;line-height:12px;color:#2a2a2a;transform:scaleX(0.9259);transform-origin:0 50%;-webkit-text-stroke:0.1px #2a2a2a;">0.00%</span>
<span class="t" style="left:1228.50px;top:449.50px;font-size:7.99px;line-height:12px;color:#2a2a2a;transform:scaleX(0.9259);transform-origin:0 50%;-webkit-text-stroke:0.1px #2a2a2a;">0.00%</span>
<span class="t" style="left:1228.50px;top:470.30px;font-size:7.99px;line-height:12px;color:#2a2a2a;transform:scaleX(0.9259);transform-origin:0 50%;-webkit-text-stroke:0.1px #2a2a2a;">0.00%</span>
<span class="t" style="left:1228.50px;top:491.00px;font-size:7.99px;line-height:12px;color:#2a2a2a;transform:scaleX(0.9259);transform-origin:0 50%;-webkit-text-stroke:0.1px #2a2a2a;">0.00%</span>
<span class="t" style="left:1228.50px;top:511.40px;font-size:7.99px;line-height:12px;color:#2a2a2a;transform:scaleX(0.9259);transform-origin:0 50%;-webkit-text-stroke:0.1px #2a2a2a;">0.00%</span>
<span class="t" style="left:1228.50px;top:532.40px;font-size:7.99px;line-height:12px;color:#2a2a2a;transform:scaleX(0.9259);transform-origin:0 50%;-webkit-text-stroke:0.1px #2a2a2a;">0.00%</span>
<span class="t" style="left:1228.50px;top:552.70px;font-size:7.99px;line-height:12px;color:#2a2a2a;transform:scaleX(0.9259);transform-origin:0 50%;-webkit-text-stroke:0.1px #2a2a2a;">0.00%</span>
<span class="t" style="left:1228.50px;top:573.30px;font-size:7.99px;line-height:12px;color:#2a2a2a;transform:scaleX(0.9259);transform-origin:0 50%;-webkit-text-stroke:0.1px #2a2a2a;">0.00%</span>
<span class="t" style="left:1313.08px;top:594.40px;font-size:7.99px;line-height:12px;color:#2a2a2a;transform:scaleX(0.9259);transform-origin:0 50%;-webkit-text-stroke:0.1px #2a2a2a;">1,039.89%</span>
<span class="t" style="left:1228.66px;top:614.50px;font-size:7.99px;line-height:12px;color:#2a2a2a;transform:scaleX(0.9259);transform-origin:0 50%;-webkit-text-stroke:0.1px #2a2a2a;">1.91%</span>
<span class="t" style="left:1228.50px;top:635.60px;font-size:7.99px;line-height:12px;color:#2a2a2a;transform:scaleX(0.9259);transform-origin:0 50%;-webkit-text-stroke:0.1px #2a2a2a;">0.00%</span>
<span class="t" style="left:1274.00px;top:662.70px;font-size:8.9px;line-height:13px;color:#2a2a2a;transform:scaleX(0.9107);transform-origin:0 50%;-webkit-text-stroke:0.1px #2a2a2a;">Réalisation</span>
</div></body></html>
